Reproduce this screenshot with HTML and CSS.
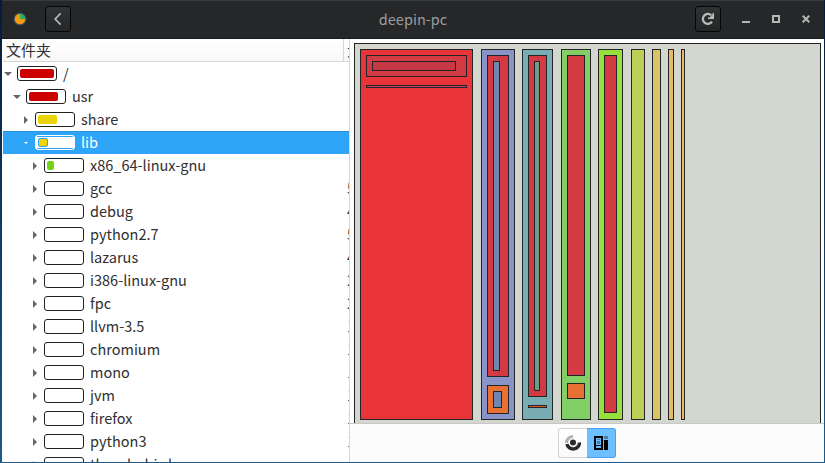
FILE: index.html
```
<!DOCTYPE html>
<html lang="zh-CN">
<head>
<meta charset="utf-8">
<title>deepin-pc</title>
<link rel="stylesheet" href="styles.css">
</head>
<body>
<div class="window">
  <header class="titlebar">
    <svg class="app-icon" width="14" height="14" viewBox="0 0 14 14"><circle cx="7" cy="7" r="6.6" fill="#34495e"/><circle cx="7" cy="7" r="5.3" fill="#f39c12"/><path d="M7 7V1.7A5.3 5.3 0 0 1 12.3 7Z" fill="#27ae60"/></svg>
    <button class="tool back"><svg width="24" height="24" viewBox="0 0 24 24"><path d="M14.6 6.4L9.2 12L14.6 17.6" fill="none" stroke="#b4b5b5" stroke-width="1.7"/></svg></button>
    <h1 class="title">deepin-pc</h1>
    <button class="tool"><svg width="24" height="24" viewBox="0 0 24 24"><path d="M15.300 8.300A5 5 0 1 0 16 14.700" fill="none" stroke="#b9baba" stroke-width="2.200"/><path d="M18 6V12H12V10.500H13.500L16.500 7.500V6Z" fill="#b9baba"/></svg></button>
    <div class="controls">
      <svg width="8" height="8" viewBox="0 0 8 8"><path d="M0 6h8v2H0z"/></svg>
      <svg width="8" height="8" viewBox="0 0 8 8"><path d="M0 0h8v8H0zM2 2v4h4V2z" fill-rule="evenodd"/></svg>
      <svg width="8" height="8" viewBox="0 0 8 8"><path d="M.7.7L7.3 7.3M7.3.7L.7 7.3" stroke="#b5b6b6" stroke-width="2"/></svg>
    </div>
  </header>
  <main class="content">
    <section class="tree">
      <div class="head"><span class="name">文件夹</span><span class="size">大小</span></div>
      <div class="row l0"><i class="arrow open"></i><span class="bar"><b class="red w34"></b></span><span class="label">/</span></div>
      <div class="row l1"><i class="arrow open"></i><span class="bar"><b class="red w29"></b></span><span class="label">usr</span></div>
      <div class="row l2"><i class="arrow"></i><span class="bar"><b class="yellow w19"></b></span><span class="label">share</span></div>
      <div class="row l2 selected"><i class="arrow open"></i><span class="bar"><b class="yellow w10"></b></span><span class="label">lib</span></div>
      <div class="row l3"><i class="arrow"></i><span class="bar"><b class="green w7"></b></span><span class="label">x86_64-linux-gnu</span></div>
      <div class="row l3"><i class="arrow"></i><span class="bar"></span><span class="label">gcc</span><span class="size">5</span></div>
      <div class="row l3"><i class="arrow"></i><span class="bar"></span><span class="label">debug</span><span class="size">4</span></div>
      <div class="row l3"><i class="arrow"></i><span class="bar"></span><span class="label">python2.7</span><span class="size">5</span></div>
      <div class="row l3"><i class="arrow"></i><span class="bar"></span><span class="label">lazarus</span><span class="size">4</span></div>
      <div class="row l3"><i class="arrow"></i><span class="bar"></span><span class="label">i386-linux-gnu</span><span class="size">2</span></div>
      <div class="row l3"><i class="arrow"></i><span class="bar"></span><span class="label">fpc</span><span class="size">2</span></div>
      <div class="row l3"><i class="arrow"></i><span class="bar"></span><span class="label">llvm-3.5</span><span class="size">1</span></div>
      <div class="row l3"><i class="arrow"></i><span class="bar"></span><span class="label">chromium</span><span class="size">1</span></div>
      <div class="row l3"><i class="arrow"></i><span class="bar"></span><span class="label">mono</span><span class="size">1</span></div>
      <div class="row l3"><i class="arrow"></i><span class="bar"></span><span class="label">jvm</span><span class="size">1</span></div>
      <div class="row l3"><i class="arrow"></i><span class="bar"></span><span class="label">firefox</span><span class="size">1</span></div>
      <div class="row l3"><i class="arrow"></i><span class="bar"></span><span class="label">python3</span><span class="size">1</span></div>
      <div class="row l3"><i class="arrow"></i><span class="bar"></span><span class="label">thunderbird</span></div>
    </section>
    <section class="chart">
      <svg class="treemap" width="474" height="384" viewBox="350 39 474 384">
        <g stroke="#222526" stroke-width="1">
          <rect x="354.500" y="43.500" width="466" height="382" fill="#d3d7cf"/>
          <rect x="360.500" y="49.500" width="112" height="370" fill="#e93439"/>
          <rect x="366.500" y="55.500" width="100" height="21" fill="#d43a44"/>
          <rect x="372.500" y="61.500" width="83" height="9" fill="#c63944"/>
          <rect x="366.500" y="85.500" width="100" height="2" fill="#c9405e"/>
          <rect x="481.500" y="49.500" width="33" height="370" fill="#8893c7"/>
          <rect x="487.500" y="55.500" width="21" height="321" fill="#d43a44"/>
          <rect x="493.500" y="61.500" width="6" height="309" fill="#6e86b3"/>
          <rect x="487.500" y="385.500" width="21" height="28" fill="#e87033"/>
          <rect x="493.500" y="391.500" width="8" height="16" fill="#6e86b3"/>
          <rect x="522.500" y="49.500" width="30" height="370" fill="#78adb3"/>
          <rect x="528.500" y="55.500" width="18" height="341" fill="#d43a44"/>
          <rect x="534.500" y="61.500" width="5" height="329" fill="#6ba087"/>
          <rect x="528.500" y="405.500" width="18" height="2" fill="#e6552e"/>
          <rect x="561.500" y="49.500" width="29" height="370" fill="#83ce65"/>
          <rect x="567.500" y="55.500" width="17" height="320" fill="#d43a44"/>
          <rect x="567.500" y="383.500" width="17" height="15" fill="#e87033"/>
          <rect x="598.500" y="49.500" width="24" height="370" fill="#97df3a"/>
          <rect x="604.500" y="55.500" width="12" height="357" fill="#d43a44"/>
          <rect x="631.500" y="49.500" width="13" height="370" fill="#bdcf56"/>
          <rect x="652.500" y="49.500" width="8" height="370" fill="#d9c363"/>
          <rect x="668.500" y="49.500" width="5" height="370" fill="#e8b86b"/>
          <rect x="681.500" y="49.500" width="3" height="370" fill="#eeb66a"/>
        </g>
      </svg>
      <footer class="footer">
        <div class="switch">
          <button class="mode"><svg width="16" height="16" viewBox="0 0 16 16"><path d="M8 1.500A6.500 6.500 0 0 0 1.500 8" fill="none" stroke="#b2b2b2" stroke-width="3"/><path d="M2 9A6 5.500 0 0 0 14.300 7.500" fill="none" stroke="#2a2a2a" stroke-width="3.400"/><circle cx="8" cy="7.500" r="3" fill="#2a2a2a"/></svg></button>
          <button class="mode active"><svg width="14" height="14" viewBox="0 0 14 14"><path d="M0 0h9v14H0z"/><path d="M2 2h5v7H2zM2 10h5v2H2z" fill="#6cc0ff"/><path d="M3 3h3v1H3zM3 5h3v3H3zM10 0h4v3h-4z" fill="#457fa9"/><path d="M10 4h4v10h-4z"/></svg></button>
        </div>
      </footer>
    </section>
  </main>
</div>
</body>
</html>
```
FILE: styles.css
```
* { box-sizing: border-box; }
body {
  margin: 0;
  width: 825px;
  height: 463px;
  padding: 0 1px 1px 2px;
  overflow: hidden;
  background: linear-gradient(#061a38, #1a5a8c);
  font: 14.5px/23px "Noto Sans CJK SC", sans-serif;
  color: #303030;
}
.window { height: 462px; background: #fff; display: flex; flex-direction: column; }
.titlebar {
  height: 39px;
  display: flex;
  align-items: center;
  padding: 0 14px 1px 11px;
  background: #252729;
  border-top: 1px solid #393b3d;
  border-bottom: 1px solid #17191a;
}
.app-icon { flex: none; margin-right: 18px; }
.tool {
  width: 26px;
  height: 26px;
  padding: 0;
  border: 1px solid #050505;
  border-radius: 3px;
  background: linear-gradient(#303234, #242628);
}
.tool svg { display: block; }
.title {
  flex: 1;
  margin: 0;
  padding: 0 0 2px 60px;
  text-align: center;
  font-size: 14.5px;
  font-weight: 400;
  color: #9b9d9e;
}
.controls { display: flex; gap: 22px; margin-left: 21px; fill: #b5b6b6; }
.content { flex: 1; display: flex; min-height: 0; }
.tree { width: 348px; border-right: 1px solid #d6d6d6; padding: 0 0 1px 1px; overflow: hidden; }
.head {
  display: flex;
  height: 23px;
  line-height: 21px;
  background: linear-gradient(#fff, #f8f8f8);
  border-bottom: 1px solid #d6d6d6;
  overflow: hidden;
  white-space: nowrap;
}
.head .name { flex: none; width: 341px; padding-left: 3px; font-size: 15px; border-right: 1px solid #d6d6d6; }
.head .size { flex: none; margin-left: 3px; }
.row { display: flex; align-items: center; height: 23px; white-space: nowrap; }
.l1 { padding-left: 9px; }
.l2 { padding-left: 18px; }
.l3 { padding-left: 27px; }
.arrow { flex: none; width: 14px; height: 8px; display: flex; justify-content: center; align-items: center; padding-right: 4px; }
.arrow::before { content: ""; border: solid transparent; border-width: 4px 0 4px 4px; border-left-color: #666; }
.arrow.open::before { border-width: 4px 4px 0; border-color: #666 transparent transparent; }
.bar { flex: none; width: 40px; height: 15px; border: 1px solid #222; border-radius: 3px; background: #fff; padding: 2px; }
.bar b { display: block; height: 9px; border-radius: 2px; }
.red { background: #c00; }
.yellow { background: #edd400; }
.green { background: #73d216; }
.w34 { width: 34px; }
.w29 { width: 29px; }
.w19 { width: 19px; }
.w10 { width: 10px; }
.w7 { width: 7px; }
.label { margin-left: 6px; line-height: 21px; padding-bottom: 2px; }
.row .size { margin-left: auto; width: 2px; overflow: hidden; line-height: 21px; padding-bottom: 2px; }
.selected { background: #2ea5f8; box-shadow: inset 0 1px #2a93de; color: #fff; }
.selected .bar { border-color: #fff; padding: 1px 2px; background: linear-gradient(#2ea5f8, #2ea5f8) 1px 0 / 36px 1px no-repeat, linear-gradient(#2ea5f8, #2ea5f8) 1px 100% / 36px 1px no-repeat, #fff; }
.selected .bar b { height: 9px; margin-top: 1px; border: 1px solid #2ea5f8; }
.selected .arrow.open::before { border-width: 2px 2px 0; border-color: #fff transparent transparent; }
.chart { flex: 1; display: flex; flex-direction: column; min-width: 0; }
.treemap { display: block; flex: none; }
.footer {
  flex: 1;
  display: flex;
  justify-content: center;
  padding-top: 4px;
  background: #fcfcfc;
  border-top: 1px solid #c8c8c8;
}
.switch { display: flex; height: 30px; }
.mode {
  width: 29px;
  height: 30px;
  padding: 0;
  display: flex;
  align-items: center;
  justify-content: center;
  border: 1px solid #d3d3d3;
  border-right: 0;
  border-radius: 3px 0 0 3px;
  background: linear-gradient(#fff, #f9f9f9);
}
.mode.active { border: 1px solid #4ba0f5; border-left: 0; border-radius: 0 3px 3px 0; background: #6cc0ff; }
```
